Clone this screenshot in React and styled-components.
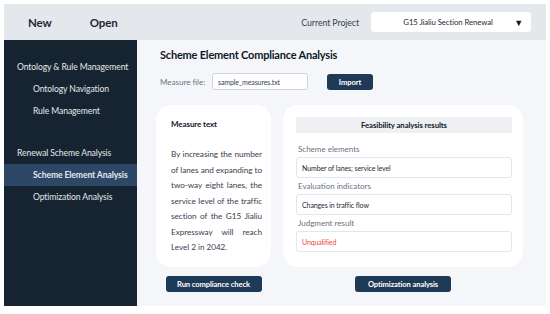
import React from "react";
import styled, { createGlobalStyle } from "styled-components";

const Global = createGlobalStyle`
  html, body { margin: 0; padding: 0; background: #ffffff; }
  body { font-family: Lato, "Open Sans", sans-serif; }
  * { box-sizing: border-box; }
`;

const Frame = styled.div`
  margin: 4px;
  width: 542px;
  height: 302px;
  display: grid;
  grid-template-rows: 36px 1fr;
  grid-template-columns: 133px 1fr;
`;

const TopBar = styled.header`
  grid-column: 1 / 3;
  background: #e4e7eb;
  display: flex;
  align-items: center;
  padding: 0 15px 0 24px;
`;

const MenuItem = styled.span`
  font-weight: 700;
  font-size: 11.5px;
  letter-spacing: -0.1px;
  color: #1f2937;
  margin-right: ${(p) => p.$gap || 0}px;
`;

const Spacer = styled.div`
  flex: 1;
`;

const ProjectLabel = styled.span`
  font-size: 8.8px;
  letter-spacing: -0.1px;
  color: #374151;
  margin-right: 12px;
`;

const Select = styled.div`
  width: 160px;
  height: 20px;
  background: #ffffff;
  border-radius: 3px;
  display: flex;
  align-items: center;
  justify-content: center;
  position: relative;
  font-size: 7.8px;
  letter-spacing: -0.1px;
  color: #1f2937;
  padding-right: 6px;
`;

const Caret = styled.span`
  position: absolute;
  right: 8px;
  top: 50%;
  transform: translateY(-50%);
  font-size: 9px;
  color: #111827;
`;

const Sidebar = styled.nav`
  background: #152430;
  padding-top: 16px;
  display: flex;
  flex-direction: column;
`;

const Group = styled.div`
  display: flex;
  flex-direction: column;
  margin-top: ${(p) => p.$mt || 0}px;
`;

const NavItem = styled.div`
  height: 22px;
  display: flex;
  align-items: center;
  white-space: nowrap;
  padding-left: ${(p) => (p.$sub ? 29 : 13)}px;
  font-size: 8.6px;
  letter-spacing: -0.1px;
  color: #e5e7eb;
  font-weight: ${(p) => (p.$active ? 700 : 400)};
  background: ${(p) => (p.$active ? "#2c4866" : "transparent")};
`;

const Main = styled.main`
  background: #f4f6f9;
  padding: 7px 22px 0 19px;
  display: flex;
  flex-direction: column;
`;

const Title = styled.h1`
  margin: 0 0 10px 4px;
  font-size: 11px;
  letter-spacing: -0.2px;
  line-height: 16px;
  font-weight: 700;
  color: #111827;
`;

const FileRow = styled.div`
  display: flex;
  align-items: center;
  height: 17px;
  margin-left: 4px;
`;

const FileLabel = styled.span`
  font-size: 8px;
  color: #6b7280;
  width: 52px;
`;

const FileInput = styled.div`
  width: 96px;
  height: 17px;
  border: 1px solid #cfd4da;
  border-radius: 3px;
  background: #fff;
  font-size: 7px;
  letter-spacing: -0.1px;
  color: #374151;
  display: flex;
  align-items: center;
  padding-left: 5px;
  margin-right: 19px;
`;

const Button = styled.button`
  height: 16px;
  width: ${(p) => p.$w}px;
  border: none;
  border-radius: 3px;
  background: #1f3a56;
  color: #ffffff;
  font-family: inherit;
  font-weight: 700;
  font-size: 7.6px;
  letter-spacing: -0.1px;
  padding: 0;
`;

const Columns = styled.div`
  margin-top: 15px;
  display: grid;
  grid-template-columns: 115px 240px;
  column-gap: 12px;
  row-gap: 9px;
`;

const Card = styled.section`
  background: #ffffff;
  border-radius: 15px;
  height: 162px;
  padding: ${(p) => p.$pad};
`;

const CardTitle = styled.div`
  font-size: 8px;
  font-weight: 700;
  letter-spacing: -0.1px;
  color: #111827;
  line-height: 12px;
`;

const Body = styled.p`
  margin: 17px 0 0;
  font-size: 8.2px;
  letter-spacing: -0.05px;
  line-height: 15.5px;
  color: #374151;
  text-align: justify;
`;

const ResultHeader = styled.div`
  height: 16px;
  background: #eef0f3;
  display: flex;
  align-items: center;
  justify-content: center;
  font-size: 7.8px;
  letter-spacing: -0.1px;
  font-weight: 700;
  color: #111827;
`;

const FieldLabel = styled.div`
  font-size: 8px;
  color: #6b7280;
  margin: ${(p) => p.$mt}px 0 0 2px;
  line-height: 12px;
`;

const Field = styled.div`
  margin-top: 2px;
  height: 21px;
  border: 1px solid #e3e6ea;
  border-radius: 3px;
  background: #fff;
  display: flex;
  align-items: center;
  padding-left: 5px;
  font-size: 7px;
  letter-spacing: -0.1px;
  color: ${(p) => (p.$danger ? "#ef4444" : "#1f2937")};
`;

const ButtonCell = styled.div`
  display: flex;
  justify-content: center;
`;

export default function App() {
  return (
    <>
      <Global />
      <Frame>
        <TopBar>
          <MenuItem $gap={38}>New</MenuItem>
          <MenuItem>Open</MenuItem>
          <Spacer />
          <ProjectLabel>Current Project</ProjectLabel>
          <Select>
            G15 Jialiu Section Renewal
            <Caret>▼</Caret>
          </Select>
        </TopBar>
        <Sidebar>
          <Group>
            <NavItem>Ontology &amp; Rule Management</NavItem>
            <NavItem $sub>Ontology Navigation</NavItem>
            <NavItem $sub>Rule Management</NavItem>
          </Group>
          <Group $mt={20}>
            <NavItem>Renewal Scheme Analysis</NavItem>
            <NavItem $sub $active>Scheme Element Analysis</NavItem>
            <NavItem $sub>Optimization Analysis</NavItem>
          </Group>
        </Sidebar>
        <Main>
          <Title>Scheme Element Compliance Analysis</Title>
          <FileRow>
            <FileLabel>Measure file:</FileLabel>
            <FileInput>sample_measures.txt</FileInput>
            <Button $w={46}>Import</Button>
          </FileRow>
          <Columns>
            <Card $pad="13px 9px 0 15px">
              <CardTitle>Measure text</CardTitle>
              <Body>
                By increasing the number of lanes and expanding to two-way eight
                lanes, the service level of the traffic section of the G15
                Jialiu Expressway will reach Level 2 in 2042.
              </Body>
            </Card>
            <Card $pad="12px 11px 0 13px">
              <ResultHeader>Feasibility analysis results</ResultHeader>
              <FieldLabel $mt={10}>Scheme elements</FieldLabel>
              <Field>Number of lanes; service level</Field>
              <FieldLabel $mt={2}>Evaluation indicators</FieldLabel>
              <Field>Changes in traffic flow</Field>
              <FieldLabel $mt={2}>Judgment result</FieldLabel>
              <Field $danger>Unqualified</Field>
            </Card>
            <ButtonCell>
              <Button $w={96}>Run compliance check</Button>
            </ButtonCell>
            <ButtonCell>
              <Button $w={96}>Optimization analysis</Button>
            </ButtonCell>
          </Columns>
        </Main>
      </Frame>
    </>
  );
}
